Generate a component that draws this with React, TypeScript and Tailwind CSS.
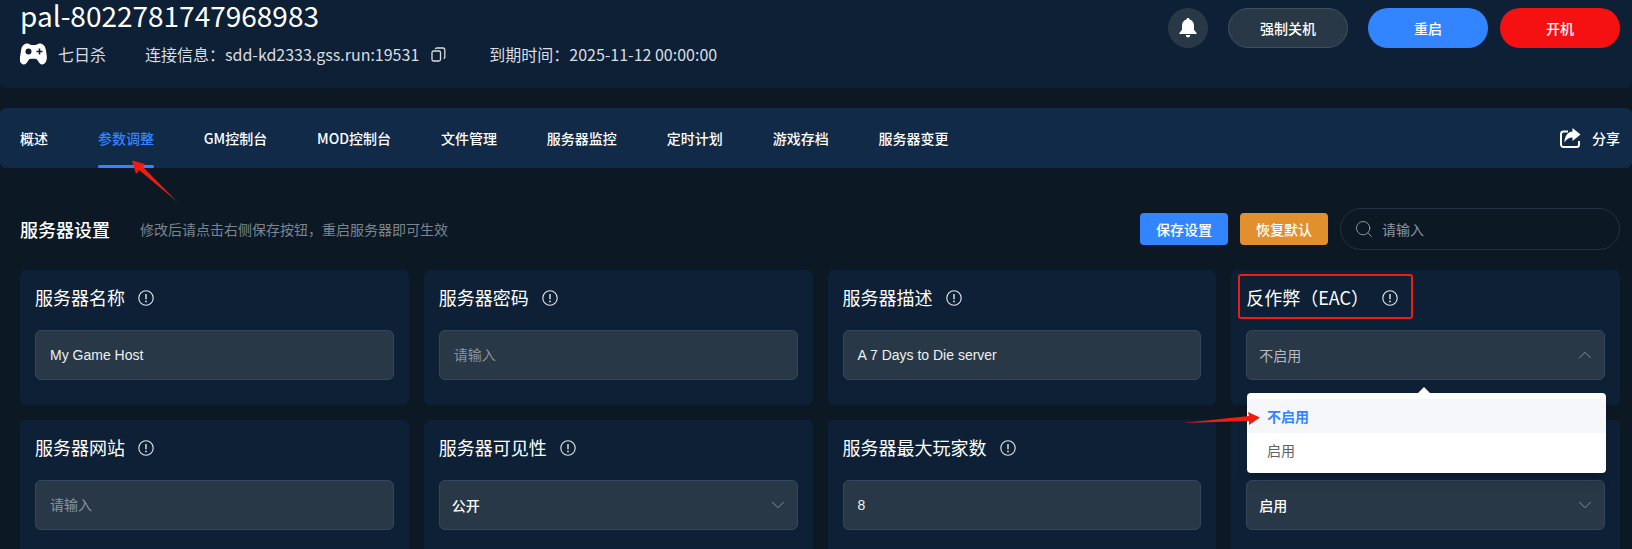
import { ChevronDown, ChevronUp, Search } from "lucide-react";

const TABS = ["概述", "参数调整", "GM控制台", "MOD控制台", "文件管理", "服务器监控", "定时计划", "游戏存档", "服务器变更"];

type Field = { label: string; value?: string; placeholder?: boolean; bold?: boolean; select?: "up" | "down"; muted?: boolean };

const FIELDS: Field[] = [
  { label: "服务器名称", value: "My Game Host" },
  { label: "服务器密码", value: "请输入", placeholder: true },
  { label: "服务器描述", value: "A 7 Days to Die server" },
  { label: "反作弊（EAC）", value: "不启用", select: "up", muted: true },
  { label: "服务器网站", value: "请输入", placeholder: true },
  { label: "服务器可见性", value: "公开", select: "down", bold: true },
  { label: "服务器最大玩家数", value: "8" },
  { label: "", value: "启用", select: "down", bold: true },
];

function InfoIcon() {
  return (
    <svg width="16" height="16" viewBox="0 0 16 16" fill="none" className="shrink-0">
      <circle cx="8" cy="8" r="7.2" stroke="#e5e7eb" strokeWidth="1.1" />
      <path d="M8 4v5.2" stroke="#e5e7eb" strokeWidth="1.4" />
      <circle cx="8" cy="11.4" r="0.9" fill="#e5e7eb" />
    </svg>
  );
}

function FieldCard({ f }: { f: Field }) {
  return (
    <div className="h-[135px] rounded-md bg-[#0d2035] px-[15px] pt-[15px]">
      <div className="flex h-[25px] items-center gap-[13px] text-[18px] leading-[25px] text-white">
        <span>{f.label}</span>
        {f.label && <InfoIcon />}
      </div>
      <div className={`mt-[20px] flex h-[50px] items-center justify-between rounded-md border border-[#34475a] bg-[#283847] text-[14px] ${f.select ? "pl-[12px] pr-[8px]" : "px-[14px]"}`}>
        <span
          className={
            f.placeholder ? "font-['Liberation_Sans','Noto_Sans_CJK_SC',sans-serif] text-[#8d949c]"
            : f.bold ? "font-medium text-white"
            : f.muted ? "text-[#b6bcc3]"
            : "font-['Liberation_Sans','Noto_Sans_CJK_SC',sans-serif] text-[#eef0f2]"
          }
        >
          {f.value}
        </span>
        {f.select === "up" && <ChevronUp size={22} strokeWidth={1} className="text-[#8d949c]" />}
        {f.select === "down" && <ChevronDown size={22} strokeWidth={1} className="text-[#8d949c]" />}
      </div>
    </div>
  );
}

export default function App() {
  return (
    <div className="relative h-[549px] w-[1632px] overflow-hidden bg-[#0c1824] font-['Noto_Sans_CJK_SC','Noto_Sans',sans-serif] text-white">
      {/* top header */}
      <header className="flex h-[88px] justify-between rounded-b-md bg-[#0d2035] pl-[20px] pr-[12px]">
        <div>
          <div className="text-[28px] leading-[30px]">pal-8022781747968983</div>
          <div className="mt-[12px] flex h-[24px] items-center text-[16px] text-[#d9dde1]">
            <svg width="27" height="22" viewBox="0 0 27 22" fill="#fff" className="mr-[11px]">
              <path d="M7.500 0.500c1.800 0 2.600 1.500 4 1.500h4c1.400 0 2.200-1.500 4-1.500 3.600 0 5.600 2.500 6.300 6l.9 6c.6 4-.8 8.500-3.900 8.900-2.300.3-3.600-1.600-4.800-3.500-.8-1.300-1.500-2.100-2.900-2.100h-4.200c-1.400 0-2.100.8-2.900 2.100-1.200 1.900-2.500 3.800-4.800 3.500C.1 21 -1.300 16.500 .3 12.500l.9-6c.7-3.500 2.700-6 6.300-6z" />
              <circle cx="8.500" cy="8.500" r="3" fill="#0d2035" />
              <path d="M16.500 8.500h6M19.500 5.500v6" stroke="#0d2035" strokeWidth="1.600" />
            </svg>
            <span className="w-[87px]">七日杀</span>
            <span>连接信息：sdd-kd2333.gss.run:19531</span>
            <svg width="15" height="15" viewBox="0 0 15 15" fill="none" stroke="#d9dde1" strokeWidth="1.300" className="ml-[12px]">
              <rect x="1" y="4" width="8.500" height="10" rx="1.500" />
              <path d="M4.500 2.200C4.500 1.500 5 1 5.700 1H12c1 0 1.800.8 1.800 1.800v7.400c0 .7-.5 1.200-1.200 1.200" />
            </svg>
            <span className="ml-[43px]">到期时间：2025-11-12 00:00:00</span>
          </div>
        </div>
        <div className="mt-[8px] flex h-[40px] items-center text-[14px] font-medium">
          <div className="flex h-[40px] w-[40px] items-center justify-center rounded-full bg-[#283847]">
            <svg width="18" height="20" viewBox="0 0 18 20" fill="#fff">
              <path d="M9 0c1 0 1.500.7 1.600 1.500C13.400 2.200 15 4.700 15 7.500v4.300l2.600 3.200v1H.4v-1L3 11.800V7.500c0-2.800 1.600-5.300 4.400-6C7.500.7 8 0 9 0z" />
              <path d="M6.800 17h4.400c0 1.500-1 2.500-2.200 2.500S6.800 18.500 6.800 17z" />
            </svg>
          </div>
          <button className="ml-[20px] h-[40px] w-[120px] rounded-full border border-[#3f4f5f] bg-[#283847]">强制关机</button>
          <button className="ml-[20px] h-[40px] w-[120px] rounded-full bg-[#3385ff]">重启</button>
          <button className="ml-[12px] h-[40px] w-[120px] rounded-full bg-[#f51111]">开机</button>
        </div>
      </header>

      {/* tabs */}
      <nav className="mt-[20px] flex h-[60px] items-center rounded-md bg-[#112a47] pl-[20px] pr-[12px] text-[14px] font-medium">
        <div className="flex gap-[49.9px]">
          {TABS.map((t, i) => (
            <div key={t} className={`relative ${i === 1 ? "text-[#3385ff]" : "text-white"}`}>
              {t}
              {i === 1 && <span className="absolute left-0 right-0 top-[37px] h-[3px] rounded-full bg-[#3385ff]" />}
            </div>
          ))}
        </div>
        <div className="ml-auto flex items-center gap-[11px]">
          <svg width="21" height="20" viewBox="0 0 21 20" fill="none">
            <path d="M8 3.500H3.500A2.500 2.500 0 0 0 1 6v10.500A2.500 2.500 0 0 0 3.500 19h13a2.500 2.500 0 0 0 2.500-2.500V13" stroke="#fff" strokeWidth="2" />
            <path d="M12.500 0l8 6.500-8 6.500V9.500C9 9.500 6.500 11 4.500 14.500 4.500 8.500 7.500 4 12.500 3.500z" fill="#fff" />
          </svg>
          <span>分享</span>
        </div>
      </nav>

      {/* settings heading */}
      <div className="ml-[20px] mr-[12px] mt-[40px] flex h-[42px] items-center">
        <span className="text-[18px] font-medium">服务器设置</span>
        <span className="ml-[30px] text-[14px] text-[#7c858e]">修改后请点击右侧保存按钮，重启服务器即可生效</span>
        <button className="ml-auto h-[32px] w-[88px] rounded bg-[#3385ff] text-[14px] font-medium">保存设置</button>
        <button className="ml-[12px] h-[32px] w-[88px] rounded bg-[#e28f2d] text-[14px] font-medium">恢复默认</button>
        <div className="ml-[12px] flex h-[42px] w-[280px] items-center rounded-full border border-[#243140] pl-[13px] text-[14px] text-[#8d949c]">
          <Search size={20} strokeWidth={1.200} className="text-[#8d949c]" />
          <span className="ml-[8px]">请输入</span>
        </div>
      </div>

      {/* field grid */}
      <div className="ml-[20px] mr-[12px] mt-[20px] grid grid-cols-4 gap-x-[15px] gap-y-[15px]">
        {FIELDS.map((f, i) => <FieldCard key={i} f={f} />)}
      </div>

      {/* open select menu */}
      <div className="absolute left-[1247px] top-[393px] w-[359px] rounded bg-white py-[6px] text-[14px] shadow-lg">
        <div className="absolute left-[171px] top-[-6px] h-0 w-0 border-x-[6px] border-b-[6px] border-x-transparent border-b-white" />
        <div className="flex h-[34px] items-center bg-[#f5f7fa] pl-[20px] font-bold text-[#3385ff]">不启用</div>
        <div className="flex h-[34px] items-center pl-[20px] text-[#606266]">启用</div>
      </div>

      {/* screenshot annotations */}
      <div className="absolute left-[1238px] top-[274px] h-[45px] w-[175px] rounded-[3px] border-2 border-[#f01c10]" />
      <svg className="absolute left-0 top-0" width="1632" height="549" fill="#f01c10">
        <path d="M177.500 202L143 167 145 164 132 160.500 136 174 139 170z" />
        <path d="M1183 423L1249 416 1248 412 1260 417.500 1249 425 1249 421z" />
      </svg>
    </div>
  );
}
